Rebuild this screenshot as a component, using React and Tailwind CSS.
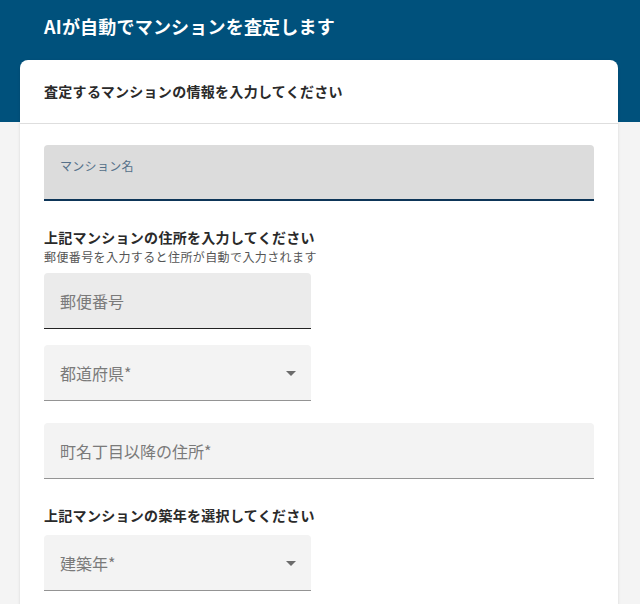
import React from "react";

const font = { fontFamily: '"Noto Sans CJK JP", "Noto Sans", sans-serif' };

function Arrow() {
  return (
    <svg width="24" height="24" viewBox="0 0 24 24" className="absolute right-[8px] top-1/2 -translate-y-1/2">
      <path d="M7 10l5 5 5-5z" fill="#6b6b6b" />
    </svg>
  );
}

function Field({ label, wide, select, bg = "bg-[#f3f3f3]", border = "border-b border-[#949494]" }) {
  return (
    <div className={`relative h-[56px] ${wide ? "w-full" : "w-[267px]"} ${bg} ${border} rounded-t-[4px] flex items-center pl-[16px]`}>
      <span className="text-[16px] text-[#7a7a7a] leading-none">{label}</span>
      {select && <Arrow />}
    </div>
  );
}

export default function App() {
  return (
    <div className="w-[640px] h-[604px] bg-[#f4f4f4] overflow-hidden relative" style={font}>
      <div className="bg-[#00517c] h-[122px] px-[44px] pt-[13px]">
        <h1 className="text-white text-[18px] font-bold leading-[26px] tracking-[0.2px]">AIが自動でマンションを査定します</h1>
      </div>
      <div className="-mt-[62px] mx-[20px] w-[598px] bg-white rounded-t-[8px] shadow-[0_1px_3px_rgba(0,0,0,0.12)] h-[560px]">
        <div className="h-[64px] flex items-center px-[24px] border-b border-[#dedede]">
          <h2 className="text-[14px] font-bold text-[#2a2a2a] tracking-[0.3px]">査定するマンションの情報を入力してください</h2>
        </div>
        <div className="px-[24px] pt-[21px]">
          <div className="h-[56px] w-full bg-[#dcdcdc] rounded-t-[4px] border-b-2 border-[#0d3558] pl-[16px] pt-[7px]">
            <span className="text-[12px] text-[#557089] leading-[16px] tracking-[0.3px]">マンション名</span>
          </div>
          <div className="mt-[26px]">
            <div className="text-[14px] font-bold text-[#2a2a2a] leading-[20px] tracking-[0.3px]">上記マンションの住所を入力してください</div>
            <div className="text-[12px] text-[#555] leading-[18px] tracking-[0.4px] mt-[1px]">郵便番号を入力すると住所が自動で入力されます</div>
          </div>
          <div className="mt-[7px]">
            <Field label="郵便番号" bg="bg-[#ebebeb]" border="border-b border-[#222]" />
          </div>
          <div className="mt-[16px]">
            <Field label="都道府県*" select />
          </div>
          <div className="mt-[22px]">
            <Field label="町名丁目以降の住所*" wide />
          </div>
          <div className="mt-[26px] text-[14px] font-bold text-[#2a2a2a] leading-[20px] tracking-[0.3px]">上記マンションの築年を選択してください</div>
          <div className="mt-[10px]">
            <Field label="建築年*" select />
          </div>
        </div>
      </div>
    </div>
  );
}
